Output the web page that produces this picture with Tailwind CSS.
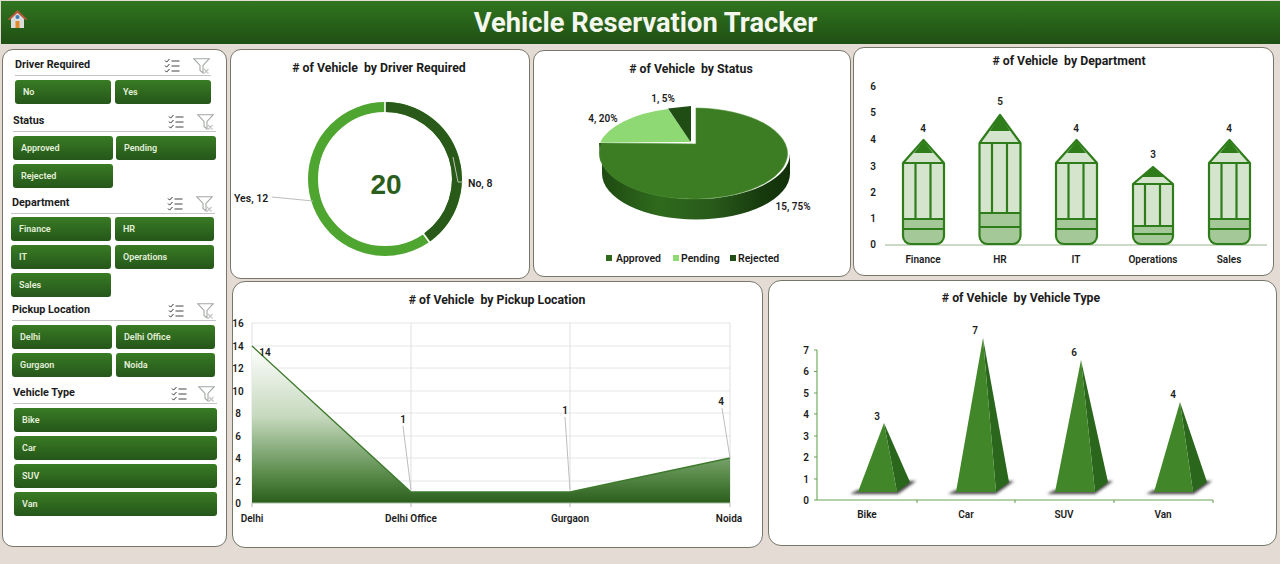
<!DOCTYPE html>
<html lang="en">
<head>
<meta charset="utf-8">
<title>Vehicle Reservation Tracker</title>
<script src="https://cdn.jsdelivr.net/npm/@tailwindcss/browser@4"></script>
</head>
<body class="w-[1280px] h-[564px] overflow-hidden bg-[#e4dbd4] font-['Roboto',sans-serif] text-[#1c1c1c]">
<svg width="0" height="0" class="absolute">
  <defs>
    <symbol id="chk" viewBox="0 0 16 15">
      <path d="M1 2.500l1.600 1.600L5.500 1M1 7.500l1.600 1.600L5.500 6M1 12.500l1.600 1.600L5.500 11" fill="none" stroke="#333" stroke-width="1"/>
      <path d="M7.500 3h8M7.500 8h8M7.500 13h8" stroke="#444" stroke-width="1.200"/>
    </symbol>
    <symbol id="flt" viewBox="0 0 17 16">
      <path d="M.7.7h15.600L10 7.500V15L7 12.500V7.500z" fill="#fff" stroke="#a3a8a2" stroke-width="1.100"/>
      <path d="M11 11l4.500 4.500M15.500 11L11 15.500" stroke="#c4c8c4" stroke-width="1.200"/>
    </symbol>
  </defs>
</svg>

<header class="flex items-start h-[43px] mt-px ml-px pl-[6px] pr-[17px] bg-gradient-to-b from-[#317520] to-[#1f4f14]">
  <svg width="21" height="20" viewBox="0 0 21 20" class="shrink-0 mt-[8px]">
    <path d="M4 9.500V19h13V9.500L10.500 3z" fill="#dcdcdc"/>
    <path d="M0.500 10.500L10.500 1l10 9.500-2 .6-8-7.200-8 7.200z" fill="#b8593a"/>
    <circle cx="10.500" cy="8" r="2" fill="#3c7fb5"/>
    <rect x="8.500" y="12" width="4" height="7" fill="#e08a2c"/>
  </svg>
  <h1 class="flex-1 text-center text-[27.300px] leading-[45px] font-bold text-[#f4f7ee]">Vehicle Reservation Tracker</h1>
</header>

<main class="flex">
  <aside class="ml-[2px] mt-[5px] w-[225px] h-[498px] shrink-0 bg-white border border-[#77786a] rounded-[11px] pt-[4px] text-[9px] font-semibold text-[#e4f0da]">
    <section class="ml-[12px] w-[196px]">
      <div class="flex items-center h-[22px] pt-[2px] border-b border-[#c4c4c4] text-[10.800px] font-bold text-[#1c1c1c]"><span class="flex-1">Driver Required</span><svg class="w-4 h-[15px]"><use href="#chk"/></svg><svg class="w-[17px] h-4 ml-[13px] mr-px"><use href="#flt"/></svg></div>
      <div class="grid grid-cols-[96px_96px] gap-[4px] mt-[4px] auto-rows-[24px]">
        <div class="flex items-center pl-2 pt-px rounded-[3px] bg-gradient-to-b from-[#397c24] to-[#25561a]">No</div>
        <div class="flex items-center pl-2 pt-px rounded-[3px] bg-gradient-to-b from-[#397c24] to-[#25561a]">Yes</div>
      </div>
    </section>
    <section class="ml-[10px] w-[203px] mt-[6px]">
      <div class="flex items-center h-[22px] pt-[2px] border-b border-[#c4c4c4] text-[10.800px] font-bold text-[#1c1c1c]"><span class="flex-1">Status</span><svg class="w-4 h-[15px]"><use href="#chk"/></svg><svg class="w-[17px] h-4 ml-[13px] mr-[2px]"><use href="#flt"/></svg></div>
      <div class="grid grid-cols-[100px_100px] gap-x-[3px] gap-y-[4px] mt-[4px] auto-rows-[24px]">
        <div class="flex items-center pl-2 pt-px rounded-[3px] bg-gradient-to-b from-[#397c24] to-[#25561a]">Approved</div>
        <div class="flex items-center pl-2 pt-px rounded-[3px] bg-gradient-to-b from-[#397c24] to-[#25561a]">Pending</div>
        <div class="flex items-center pl-2 pt-px rounded-[3px] bg-gradient-to-b from-[#397c24] to-[#25561a]">Rejected</div>
      </div>
    </section>
    <section class="ml-[8px] w-[204px] mt-[4px]">
      <div class="flex items-center h-[22px] pt-[2px] pl-px border-b border-[#c4c4c4] text-[10.800px] font-bold text-[#1c1c1c]"><span class="flex-1">Department</span><svg class="w-4 h-[15px]"><use href="#chk"/></svg><svg class="w-[17px] h-4 ml-[13px] mr-[2px]"><use href="#flt"/></svg></div>
      <div class="grid grid-cols-[100px_99px] gap-x-[4px] gap-y-[4px] mt-[3px] auto-rows-[24px]">
        <div class="flex items-center pl-2 pt-px rounded-[3px] bg-gradient-to-b from-[#397c24] to-[#25561a]">Finance</div>
        <div class="flex items-center pl-2 pt-px rounded-[3px] bg-gradient-to-b from-[#397c24] to-[#25561a]">HR</div>
        <div class="flex items-center pl-2 pt-px rounded-[3px] bg-gradient-to-b from-[#397c24] to-[#25561a]">IT</div>
        <div class="flex items-center pl-2 pt-px rounded-[3px] bg-gradient-to-b from-[#397c24] to-[#25561a]">Operations</div>
        <div class="flex items-center pl-2 pt-px rounded-[3px] bg-gradient-to-b from-[#397c24] to-[#25561a]">Sales</div>
      </div>
    </section>
    <section class="ml-[9px] w-[204px] mt-[2px]">
      <div class="flex items-center h-[22px] pt-[2px] border-b border-[#c4c4c4] text-[10.800px] font-bold text-[#1c1c1c]"><span class="flex-1">Pickup Location</span><svg class="w-4 h-[15px]"><use href="#chk"/></svg><svg class="w-[17px] h-4 ml-[13px] mr-[2px]"><use href="#flt"/></svg></div>
      <div class="grid grid-cols-[100px_99px] gap-x-[4px] gap-y-[4px] mt-[4px] auto-rows-[24px]">
        <div class="flex items-center pl-2 pt-px rounded-[3px] bg-gradient-to-b from-[#397c24] to-[#25561a]">Delhi</div>
        <div class="flex items-center pl-2 pt-px rounded-[3px] bg-gradient-to-b from-[#397c24] to-[#25561a]">Delhi Office</div>
        <div class="flex items-center pl-2 pt-px rounded-[3px] bg-gradient-to-b from-[#397c24] to-[#25561a]">Gurgaon</div>
        <div class="flex items-center pl-2 pt-px rounded-[3px] bg-gradient-to-b from-[#397c24] to-[#25561a]">Noida</div>
      </div>
    </section>
    <section class="ml-[10px] w-[204px] mt-[5px]">
      <div class="flex items-center h-[22px] pt-[2px] border-b border-[#c4c4c4] text-[10.800px] font-bold text-[#1c1c1c]"><span class="flex-1">Vehicle Type</span><svg class="w-4 h-[15px]"><use href="#chk"/></svg><svg class="w-[17px] h-4 ml-[11px] mr-[2px]"><use href="#flt"/></svg></div>
      <div class="grid gap-[4px] ml-px mt-[4px] auto-rows-[24px]">
        <div class="flex items-center pl-2 pt-px rounded-[3px] bg-gradient-to-b from-[#397c24] to-[#25561a]">Bike</div>
        <div class="flex items-center pl-2 pt-px rounded-[3px] bg-gradient-to-b from-[#397c24] to-[#25561a]">Car</div>
        <div class="flex items-center pl-2 pt-px rounded-[3px] bg-gradient-to-b from-[#397c24] to-[#25561a]">SUV</div>
        <div class="flex items-center pl-2 pt-px rounded-[3px] bg-gradient-to-b from-[#397c24] to-[#25561a]">Van</div>
      </div>
    </section>
  </aside>

  <div class="flex-1 min-w-0">
    <div class="flex items-start h-[233px]">
      <!-- Donut -->
      <div class="ml-[3px] mt-[5px] w-[300px] h-[230px] bg-white border border-[#77786a] rounded-[11px] overflow-hidden">
        <svg viewBox="231 50 298 228" class="block w-[298px] h-[228px] text-[11px] font-semibold fill-[#1c1c1c]">
          <text x="379" y="72" text-anchor="middle" class="text-[12.300px] font-bold whitespace-pre"># of Vehicle  by Driver Required</text>
          <circle cx="385" cy="179" r="72" fill="none" stroke="#4ea52f" stroke-width="10"/>
          <path d="M385 107A72 72 0 0 1 427.300 237.200" fill="none" stroke="#2a5a19" stroke-width="10"/>
          <path d="M385 100v14M422 232l8 11" stroke="#fff" stroke-width="1.600"/>
          <path d="M453 157l5 25h5" fill="none" stroke="#b9c4b2" stroke-width="1"/>
          <path d="M272 197l41 4" fill="none" stroke="#bdbdbd" stroke-width="1"/>
          <text x="468" y="187" class="text-[10.500px]">No, 8</text>
          <text x="234" y="202" class="text-[10.500px]">Yes, 12</text>
          <text x="386" y="194" text-anchor="middle" class="text-[28px] font-bold fill-[#2a5e1c] font-['Liberation_Sans',sans-serif]">20</text>
        </svg>
      </div>
      <!-- Pie -->
      <div class="ml-[3px] mt-[6px] w-[318px] h-[227px] bg-white border border-[#77786a] rounded-[11px] overflow-hidden">
        <svg viewBox="534 51 316 225" class="block w-[316px] h-[225px] text-[10px] font-semibold fill-[#1c1c1c]">
          <defs>
            <linearGradient id="pieSide" x1="0" x2="1" y1="0" y2="0">
              <stop offset="0" stop-color="#1f4a12"/><stop offset=".3" stop-color="#2f6a1c"/><stop offset=".6" stop-color="#28591a"/><stop offset=".85" stop-color="#173a0d"/><stop offset="1" stop-color="#12300a"/>
            </linearGradient>
          </defs>
          <text x="691" y="73" text-anchor="middle" class="text-[12.300px] font-bold whitespace-pre"># of Vehicle  by Status</text>
          <path d="M602 153.500V173.500A94 46 0 0 0 790 173.500V153.500A94 45.500 0 0 1 602 153.500Z" fill="url(#pieSide)"/>
          <path d="M599 143h4v20l-3-3z" fill="#2a5a19"/>
          <path d="M696 144V108A94 45.500 0 1 1 602 143Z" fill="#3c7d24" stroke="#4c8f33" stroke-width=".6"/>
          <path d="M691 142L600 142.500A94 45 0 0 1 668 109Z" fill="#8ed973"/>
          <path d="M691 141V106L668 108.500L690 141Z" fill="#1f4d13"/>
          <text x="663" y="102" text-anchor="middle">1, 5%</text>
          <text x="603" y="122" text-anchor="middle">4, 20%</text>
          <text x="793" y="210" text-anchor="middle">15, 75%</text>
          <g class="text-[10.500px]">
            <rect x="606" y="255" width="6" height="6" fill="#2f6a1c"/><text x="616" y="262">Approved</text>
            <rect x="673" y="255" width="6" height="6" fill="#8ed973"/><text x="681" y="262">Pending</text>
            <rect x="730" y="255" width="6" height="6" fill="#1f4d13"/><text x="738" y="262">Rejected</text>
          </g>
        </svg>
      </div>
      <!-- Pencils -->
      <div class="ml-[2px] mt-[3px] w-[421px] h-[229px] bg-white border border-[#77786a] rounded-[11px] overflow-hidden">
        <svg viewBox="854 48 419 227" class="block w-[419px] h-[227px] text-[10px] font-semibold fill-[#1c1c1c]">
          <defs>
            <g id="pen4">
              <path d="M903 163V236a8 8 0 0 0 8 8h25a8 8 0 0 0 8-8V163Z" fill="#d5e5cd"/>
              <path d="M903 219V236a8 8 0 0 0 8 8h25a8 8 0 0 0 8-8V219Z" fill="#a5c898"/>
              <path d="M903 163H944L923.500 140Z" fill="#d5e5cd"/>
              <path d="M914 153H933L923.500 141Z" fill="#2e7d1a"/>
              <path d="M903 163H944V236a8 8 0 0 1-8 8H911a8 8 0 0 1-8-8ZM903 163L923.500 140L944 163M903 219H944M903 229H944M915.500 163V219M930.500 163V219" fill="none" stroke="#2e7d1a" stroke-width="2.200" stroke-linejoin="round"/>
            </g>
          </defs>
          <text x="1069" y="65" text-anchor="middle" class="text-[12.300px] font-bold whitespace-pre"># of Vehicle  by Department</text>
          <g text-anchor="middle">
            <text x="873" y="90">6</text><text x="873" y="116">5</text><text x="873" y="143">4</text><text x="873" y="170">3</text><text x="873" y="196">2</text><text x="873" y="222">1</text><text x="873" y="248">0</text>
            <text x="923" y="132">4</text><text x="1000" y="105">5</text><text x="1076" y="132">4</text><text x="1153" y="158">3</text><text x="1229" y="132">4</text>
            <text x="923" y="263">Finance</text><text x="1000" y="263">HR</text><text x="1076" y="263">IT</text><text x="1153" y="263">Operations</text><text x="1229" y="263">Sales</text>
          </g>
          <path d="M885 245H1267" stroke="#9ab68c" stroke-width="1.200"/>
          <use href="#pen4"/>
          <use href="#pen4" x="153"/>
          <use href="#pen4" x="306"/>
          <!-- HR -->
          <path d="M979.500 143H1020.500V236a8 8 0 0 1-8 8H987.500a8 8 0 0 1-8-8Z" fill="#d5e5cd"/>
          <path d="M979.500 213H1020.500V236a8 8 0 0 1-8 8H987.500a8 8 0 0 1-8-8Z" fill="#a5c898"/>
          <path d="M979.500 143H1020.500L1000 115Z" fill="#d5e5cd"/>
          <path d="M990 131H1010L1000 115Z" fill="#2e7d1a"/>
          <path d="M979.500 143H1020.500V236a8 8 0 0 1-8 8H987.500a8 8 0 0 1-8-8ZM979.500 143L1000 115L1020.500 143M979.500 213H1020.500M979.500 227H1020.500M992 143V213M1007 143V213" fill="none" stroke="#2e7d1a" stroke-width="2.200" stroke-linejoin="round"/>
          <!-- Operations -->
          <path d="M1133 184H1173V236a8 8 0 0 1-8 8H1141a8 8 0 0 1-8-8Z" fill="#d5e5cd"/>
          <path d="M1133 226H1173V236a8 8 0 0 1-8 8H1141a8 8 0 0 1-8-8Z" fill="#a5c898"/>
          <path d="M1133 184H1173L1153 167Z" fill="#d5e5cd"/>
          <path d="M1142 177H1164L1153 167Z" fill="#2e7d1a"/>
          <path d="M1133 184H1173V236a8 8 0 0 1-8 8H1141a8 8 0 0 1-8-8ZM1133 184L1153 167L1173 184M1133 226H1173M1133 234H1173M1145 184V226M1160 184V226" fill="none" stroke="#2e7d1a" stroke-width="2.200" stroke-linejoin="round"/>
        </svg>
      </div>
    </div>
    <div class="flex items-start">
      <!-- Area -->
      <div class="ml-[5px] mt-[4px] w-[531px] h-[267px] bg-white border border-[#77786a] rounded-[13px] overflow-hidden">
        <svg viewBox="233 282 529 265" class="block w-[529px] h-[265px] text-[10px] font-semibold fill-[#1c1c1c]">
          <defs>
            <linearGradient id="areaG" gradientUnits="userSpaceOnUse" x1="0" x2="0" y1="346" y2="503">
              <stop offset="0" stop-color="#ffffff"/><stop offset=".45" stop-color="#c6d9be"/><stop offset=".8" stop-color="#5e8f50"/><stop offset="1" stop-color="#2a5e1c"/>
            </linearGradient>
          </defs>
          <text x="497" y="304" text-anchor="middle" class="text-[12.300px] font-bold whitespace-pre"># of Vehicle  by Pickup Location</text>
          <path d="M252 323H730M252 346H730M252 368H730M252 391H730M252 413H730M252 436H730M252 458H730M252 481H730" stroke="#e6e6e9" stroke-width="1"/>
          <path d="M252 323V503M411 323V503M570 323V503M730 323V503" stroke="#e0e0e6" stroke-width="1"/>
          <path d="M252 346L411 492H570L730 458V503H252Z" fill="url(#areaG)"/>
          <path d="M252 346L411 492H570L730 458" fill="none" stroke="#3d7a2c" stroke-width="1.400"/>
          <path d="M252 503H730" stroke="#a9bfa0" stroke-width="1"/>
          <path d="M252 503v4M411 503v4M570 503v4M730 503v4" stroke="#b4b4b4" stroke-width="1"/>
          <path d="M403 426L411 490M565 417L570 490M722 408L730 458" fill="none" stroke="#bdbdbd" stroke-width="1"/>
          <g text-anchor="middle">
            <text x="238" y="327">16</text><text x="238" y="350">14</text><text x="238" y="372">12</text><text x="238" y="395">10</text><text x="238" y="417">8</text><text x="238" y="440">6</text><text x="238" y="462">4</text><text x="238" y="485">2</text><text x="238" y="507">0</text>
            <text x="265" y="356">14</text><text x="403" y="423">1</text><text x="565" y="414">1</text><text x="721" y="405">4</text>
            <text x="252" y="522">Delhi</text><text x="411" y="522">Delhi Office</text><text x="570" y="522">Gurgaon</text><text x="729" y="522">Noida</text>
          </g>
        </svg>
      </div>
      <!-- Pyramids -->
      <div class="ml-[5px] mt-[3px] w-[509px] h-[266px] bg-white border border-[#77786a] rounded-[13px] overflow-hidden">
        <svg viewBox="769 281 507 264" class="block w-[507px] h-[264px] text-[10px] font-semibold fill-[#1c1c1c]">
          <defs>
            <filter id="blur" x="-30%" y="-80%" width="160%" height="260%"><feGaussianBlur stdDeviation="1.800"/></filter>
          </defs>
          <text x="1021" y="302" text-anchor="middle" class="text-[12.300px] font-bold whitespace-pre"># of Vehicle  by Vehicle Type</text>
          <path d="M817 350V500H1213M814 350h3M814 371.500h3M814 393h3M814 414h3M814 436h3M814 457h3M814 479h3M814 500h3M917 500v3M1015 500v3M1114 500v3M1213 500v3" fill="none" stroke="#6aa356" stroke-width="1.100"/>
          <g text-anchor="middle">
            <text x="806" y="354">7</text><text x="806" y="375">6</text><text x="806" y="397">5</text><text x="806" y="418">4</text><text x="806" y="440">3</text><text x="806" y="461">2</text><text x="806" y="483">1</text><text x="806" y="504">0</text>
            <text x="877" y="420">3</text><text x="975" y="334">7</text><text x="1074" y="356">6</text><text x="1173" y="398">4</text>
            <text x="867" y="518">Bike</text><text x="966" y="518">Car</text><text x="1064" y="518">SUV</text><text x="1163" y="518">Van</text>
          </g>
          <g fill="#444" filter="url(#blur)">
            <path d="M850 494H898L916 481H905L897 490H858Z"/>
            <path d="M948 494H996L1014 481H1003L996 490H956Z"/>
            <path d="M1047 494H1095L1113 481H1102L1095 490H1055Z"/>
            <path d="M1146 494H1194L1212 481H1201L1193 490H1154Z"/>
          </g>
          <path d="M884 423L910 482L897 492Z" fill="#2a661b"/><path d="M884 423L897 492H858Z" fill="#42862a"/>
          <path d="M983 338L1009 482L996 492Z" fill="#2a661b"/><path d="M983 338L996 492H956Z" fill="#42862a"/>
          <path d="M1081 360L1108 482L1095 492Z" fill="#2a661b"/><path d="M1081 360L1095 492H1055Z" fill="#42862a"/>
          <path d="M1180 402L1207 482L1193 492Z" fill="#2a661b"/><path d="M1180 402L1193 492H1154Z" fill="#42862a"/>
        </svg>
      </div>
    </div>
  </div>
</main>
</body>
</html>
